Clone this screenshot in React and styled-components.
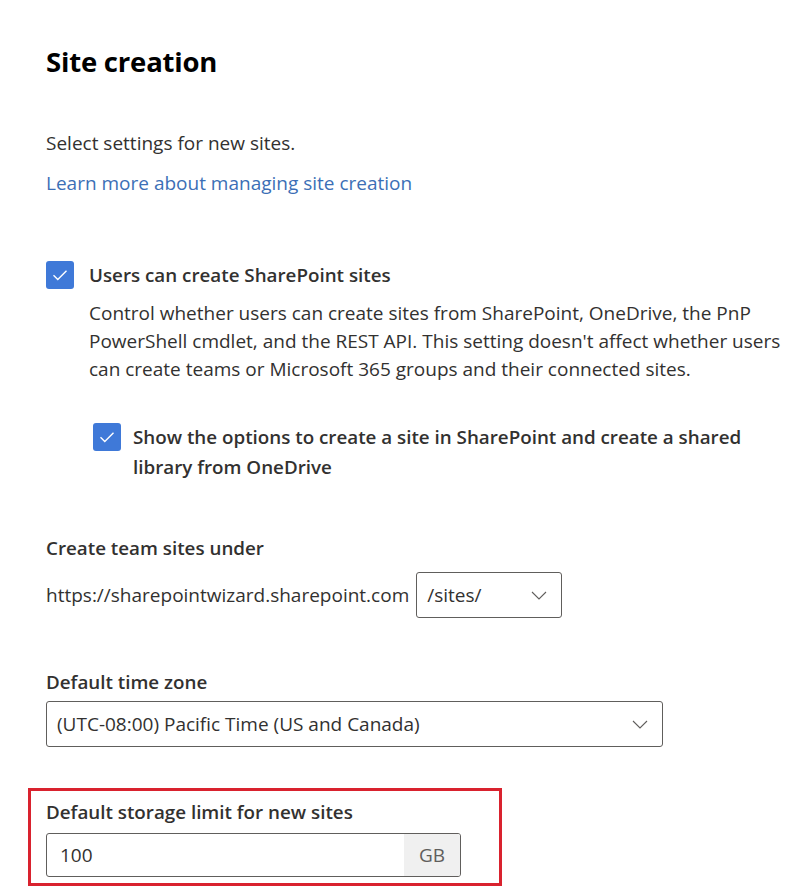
import React from "react";
import styled, { createGlobalStyle } from "styled-components";

const GlobalStyle = createGlobalStyle`
  body {
    margin: 0;
    background: #ffffff;
    font-family: "Open Sans", "Noto Sans", sans-serif;
    color: #323130;
  }
`;

const Chevron = () => (
  <svg width="16" height="9" viewBox="0 0 16 9" fill="none">
    <path d="M1 1l7 7 7-7" stroke="#605e5c" strokeWidth="1.1" />
  </svg>
);

const Check = () => (
  <svg width="16" height="12" viewBox="0 0 16 12" fill="none">
    <path d="M1.5 6.2l4.3 4.3L14.5 1.8" stroke="#fff" strokeWidth="1.4" />
  </svg>
);

const App = () => {
  return (
    <Page>
      <GlobalStyle />
      <Title>Site creation</Title>
      <Text $top={49}>Select settings for new sites.</Text>
      <Link href="#">Learn more about managing site creation</Link>

      <CheckRow $top={64}>
        <Box>
          <Check />
        </Box>
        <div>
          <CheckLabel>Users can create SharePoint sites</CheckLabel>
          <Text $top={10}>
            Control whether users can create sites from SharePoint, OneDrive, the PnP
            <br />
            PowerShell cmdlet, and the REST API. This setting doesn't affect whether users
            <br />
            can create teams or Microsoft 365 groups and their connected sites.
          </Text>
        </div>
      </CheckRow>

      <CheckRow $top={39} $indent={47} $gap={12}>
        <Box $top={1}>
          <Check />
        </Box>
        <CheckLabel $lh={30}>
          Show the options to create a site in SharePoint and create a shared
          <br />
          library from OneDrive
        </CheckLabel>
      </CheckRow>

      <FieldLabel $top={52}>Create team sites under</FieldLabel>
      <UrlRow>
        <span>https://sharepointwizard.sharepoint.com</span>
        <Select $width={146}>
          <span>/sites/</span>
          <Chevron />
        </Select>
      </UrlRow>

      <FieldLabel $top={50}>Default time zone</FieldLabel>
      <Select $width={617} $top={5}>
        <span>(UTC-08:00) Pacific Time (US and Canada)</span>
        <Chevron />
      </Select>

      <Highlight>
        <FieldLabel>Default storage limit for new sites</FieldLabel>
        <NumberField>
          <NumberValue>100</NumberValue>
          <Suffix>GB</Suffix>
        </NumberField>
      </Highlight>
    </Page>
  );
};

export default App;

const Page = styled.div`
  padding: 44px 0 0 46px;
`;

const Title = styled.h1`
  margin: 0;
  font-size: 27.5px;
  line-height: 36px;
  font-weight: 700;
  color: #000;
  letter-spacing: -0.2px;
`;

const Text = styled.p`
  margin: ${(p) => p.$top || 0}px 0 0;
  font-size: 19px;
  line-height: 28px;
  color: #323130;
  white-space: nowrap;
`;

const Link = styled.a`
  display: block;
  margin-top: 12px;
  font-size: 19px;
  line-height: 28px;
  color: #3c6fb6;
  text-decoration: none;
`;

const CheckRow = styled.div`
  display: flex;
  align-items: flex-start;
  gap: ${(p) => p.$gap || 15}px;
  margin-top: ${(p) => p.$top}px;
  margin-left: ${(p) => p.$indent || 0}px;
`;

const Box = styled.div`
  flex: none;
  width: 28px;
  height: 28px;
  margin-top: ${(p) => p.$top || 0}px;
  border-radius: 3px;
  background: #3f79d8;
  display: flex;
  align-items: center;
  justify-content: center;
`;

const CheckLabel = styled.div`
  font-size: 18.8px;
  line-height: ${(p) => p.$lh || 28}px;
  font-weight: 600;
  color: #323130;
  white-space: nowrap;
`;

const FieldLabel = styled.div`
  margin-top: ${(p) => p.$top || 0}px;
  font-size: 18.8px;
  line-height: 28px;
  font-weight: 600;
  color: #323130;
`;

const UrlRow = styled.div`
  display: flex;
  align-items: center;
  gap: 7px;
  margin-top: 10px;
  font-size: 19px;
  color: #323130;
`;

const Select = styled.div`
  box-sizing: border-box;
  width: ${(p) => p.$width}px;
  height: 46px;
  margin-top: ${(p) => p.$top || 0}px;
  display: flex;
  align-items: center;
  justify-content: space-between;
  padding: 0 14px 0 10px;
  border: 1px solid #605e5c;
  border-radius: 3px;
  font-size: 19px;
  color: #323130;
`;

const Highlight = styled.div`
  box-sizing: border-box;
  width: 474px;
  margin: 41px 0 0 -18px;
  padding: 7px 15px 6px;
  border: 3px solid #d9222e;
`;

const NumberField = styled.div`
  box-sizing: border-box;
  display: flex;
  width: 415px;
  height: 44px;
  margin-top: 7px;
  border: 1px solid #605e5c;
  border-radius: 3px;
  overflow: hidden;
`;

const NumberValue = styled.div`
  flex: 1;
  display: flex;
  align-items: center;
  padding-left: 13px;
  font-size: 19px;
  color: #323130;
`;

const Suffix = styled.div`
  width: 56px;
  display: flex;
  align-items: center;
  justify-content: center;
  background: #f0f0f0;
  font-size: 19px;
  color: #605e5c;
`;
